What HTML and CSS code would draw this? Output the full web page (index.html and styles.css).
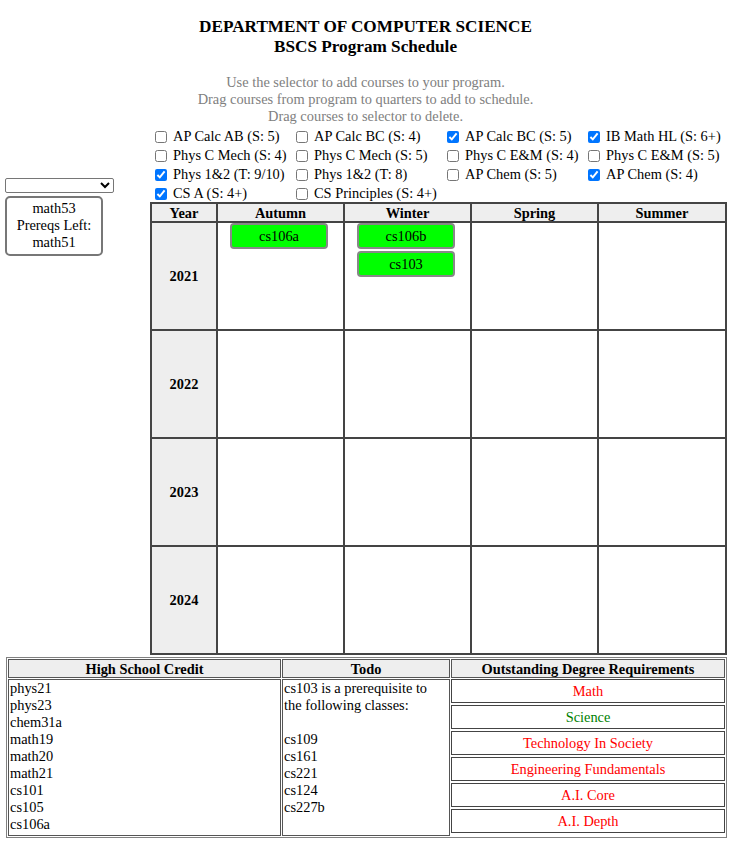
FILE: index.html
```html
<!DOCTYPE html>
<html>
<head>
<meta charset="utf-8">
<link rel="stylesheet" href="styles.css">
</head>
<body>
<div class="page">
  <div class="title">DEPARTMENT OF COMPUTER SCIENCE<br>BSCS Program Schedule</div>
  <div class="instructions">Use the selector to add courses to your program.<br>Drag courses from program to quarters to add to schedule.<br>Drag courses to selector to delete.</div>
  <div class="main">
    <div class="sidebar">
      <select class="selector"></select>
      <div class="course-card">math53<br>Prereqs Left:<br>math51</div>
    </div>
    <div class="content">
      <div class="credits">
        <label class="credit"><input type="checkbox">AP Calc AB (S: 5)</label>
        <label class="credit"><input type="checkbox">AP Calc BC (S: 4)</label>
        <label class="credit"><input type="checkbox" checked>AP Calc BC (S: 5)</label>
        <label class="credit"><input type="checkbox" checked>IB Math HL (S: 6+)</label>
        <label class="credit"><input type="checkbox">Phys C Mech (S: 4)</label>
        <label class="credit"><input type="checkbox">Phys C Mech (S: 5)</label>
        <label class="credit"><input type="checkbox">Phys C E&amp;M (S: 4)</label>
        <label class="credit"><input type="checkbox">Phys C E&amp;M (S: 5)</label>
        <label class="credit"><input type="checkbox" checked>Phys 1&amp;2 (T: 9/10)</label>
        <label class="credit"><input type="checkbox">Phys 1&amp;2 (T: 8)</label>
        <label class="credit"><input type="checkbox">AP Chem (S: 5)</label>
        <label class="credit"><input type="checkbox" checked>AP Chem (S: 4)</label>
        <label class="credit"><input type="checkbox" checked>CS A (S: 4+)</label>
        <label class="credit"><input type="checkbox">CS Principles (S: 4+)</label>
      </div>
      <table class="schedule">
        <colgroup><col class="col-year"><col class="col-q"><col class="col-q"><col class="col-q"><col class="col-q4"></colgroup>
        <tr><th>Year</th><th>Autumn</th><th>Winter</th><th>Spring</th><th>Summer</th></tr>
        <tr><td class="year">2021</td><td class="quarter"><div class="chip">cs106a</div></td><td class="quarter"><div class="chip">cs106b</div><div class="chip">cs103</div></td><td class="quarter"></td><td class="quarter"></td></tr>
        <tr><td class="year">2022</td><td class="quarter"></td><td class="quarter"></td><td class="quarter"></td><td class="quarter"></td></tr>
        <tr><td class="year">2023</td><td class="quarter"></td><td class="quarter"></td><td class="quarter"></td><td class="quarter"></td></tr>
        <tr><td class="year">2024</td><td class="quarter"></td><td class="quarter"></td><td class="quarter"></td><td class="quarter"></td></tr>
      </table>
    </div>
  </div>
  <table class="summary">
    <tr><th class="s1">High School Credit</th><th class="s2">Todo</th><th class="s3">Outstanding Degree Requirements</th></tr>
    <tr>
      <td class="list">phys21<br>phys23<br>chem31a<br>math19<br>math20<br>math21<br>cs101<br>cs105<br>cs106a</td>
      <td class="list">cs103 is a prerequisite to the following classes:<br><br>cs109<br>cs161<br>cs221<br>cs124<br>cs227b</td>
      <td class="reqs">
        <div class="req red">Math</div>
        <div class="req green">Science</div>
        <div class="req red">Technology In Society</div>
        <div class="req red">Engineering Fundamentals</div>
        <div class="req red">A.I. Core</div>
        <div class="req red">A.I. Depth</div>
      </td>
    </tr>
  </table>
</div>
</body>
</html>
```
FILE: styles.css
```css
html, body {
  margin: 0;
  padding: 0;
  background: #fff;
}
body {
  font-family: "Liberation Serif", "Times New Roman", serif;
  font-size: 14.4px;
  color: #000;
}
.page {
  padding: 17px 5px 0 5px;
}
.title {
  text-align: center;
  font-weight: bold;
  font-size: 17.2px;
  line-height: 20px;
}
.instructions {
  margin-top: 17px;
  text-align: center;
  color: #808080;
  line-height: 17px;
}
.main {
  display: flex;
  margin-top: 2px;
}
.sidebar {
  width: 145px;
  flex: none;
  padding-top: 51px;
}
.selector {
  display: block;
  width: 109px;
  height: 15px;
  margin: 0;
  padding: 0;
  font-size: 10px;
  border: 1px solid #767676;
  border-radius: 2px;
  background: #fff;
}
.course-card {
  margin-top: 3px;
  width: 98px;
  height: 60px;
  box-sizing: border-box;
  border: 2px solid #777;
  border-radius: 5px;
  text-align: center;
  line-height: 17px;
  padding-top: 2px;
}
.content {
  flex: 1;
}
.credits {
  display: grid;
  grid-template-columns: 141px 151px 141px auto;
  grid-auto-rows: 19px;
}
.credit {
  display: flex;
  align-items: center;
  white-space: nowrap;
}
.credit input {
  width: 12px;
  height: 12px;
  margin: 0 6px 0 5px;
}
.schedule {
  border-collapse: collapse;
  table-layout: fixed;
  width: 575px;
  margin-top: -1px;
  border: 2px solid #444;
}
.col-year { width: 66px; }
.col-q { width: 127px; }
.col-q4 { width: 128px; }
.schedule th {
  background: #eee;
  border: 2px solid #444;
  height: 17px;
  padding: 0;
  font-size: 14.4px;
  line-height: 16px;
}
.schedule td {
  border: 2px solid #444;
  height: 106px;
  padding: 0;
}
.year {
  background: #eee;
  font-weight: bold;
  text-align: center;
  vertical-align: middle;
}
.quarter {
  vertical-align: top;
}
.chip {
  width: 98px;
  height: 26px;
  box-sizing: border-box;
  margin: 0 0 2px 12px;
  background: #00ff00;
  border: 2px solid #888;
  border-radius: 4px;
  text-align: center;
  line-height: 22px;
}
.summary {
  margin: 2px 0 0 1px;
  width: 720px;
  border: 1px solid #808080;
  border-spacing: 1px;
  table-layout: fixed;
}
.summary th {
  background: #eee;
  border: 1px solid #555;
  height: 19px;
  padding: 0;
  box-sizing: border-box;
  line-height: 16px;
}
.s1 { width: 273px; }
.s2 { width: 168px; }
.s3 { width: 274px; }
.summary td {
  border: 1px solid #555;
  padding: 0 1px 2px 1px;
  vertical-align: top;
}
.list {
  line-height: 17px;
}
.summary td.reqs {
  padding: 0;
  border: none;
}
.req {
  height: 24px;
  box-sizing: border-box;
  border: 1px solid #444;
  text-align: center;
  line-height: 22px;
  margin-bottom: 2px;
}
.req:last-child {
  margin-bottom: 0;
}
.red { color: #ff0000; }
.green { color: #008000; }
```
